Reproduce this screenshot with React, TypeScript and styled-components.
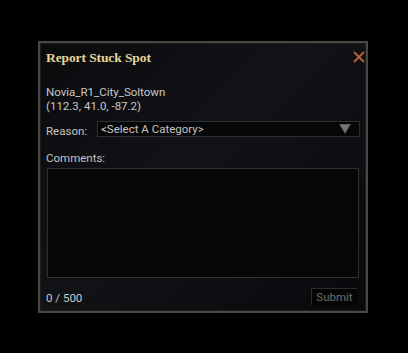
import styled, { createGlobalStyle } from "styled-components";

const GlobalStyle = createGlobalStyle`
  html, body {
    margin: 0;
    padding: 0;
    background: #000;
  }
  body {
    font-family: "Roboto", "Liberation Sans", sans-serif;
  }
`;

const Page = styled.div`
  width: 408px;
  height: 353px;
  background: #010101;
  padding: 41px 0 0 38px;
  box-sizing: border-box;
`;

const Dialog = styled.div`
  width: 330px;
  height: 272px;
  box-sizing: border-box;
  border: 2px solid #4a4845;
  box-shadow: inset 0 0 0 1px #1c1c1c;
  background: linear-gradient(135deg, #0a0b0d 0%, #111317 45%, #08090b 100%);
  padding: 6px 4px 6px 6px;
  display: flex;
  flex-direction: column;
  color: #c4c4c4;
  font-size: 11.5px;
`;

const TitleBar = styled.div`
  display: flex;
  justify-content: space-between;
  align-items: center;
  height: 19px;
`;

const Title = styled.h1`
  margin: 0;
  font-family: "Liberation Serif", "DejaVu Serif", serif;
  font-weight: 700;
  font-size: 13.5px;
  color: #e9d597;
  letter-spacing: -0.1px;
`;

const Close = styled.button`
  background: none;
  border: none;
  padding: 0;
  width: 12px;
  height: 12px;
  cursor: pointer;
  margin: -3px -3px 0 0;
`;

const Location = styled.div`
  margin-top: 17px;
  line-height: 14px;
  color: #c8c8c8;
`;

const Row = styled.div`
  display: flex;
  align-items: center;
  margin-top: 7px;
`;

const Label = styled.label`
  width: 51px;
  color: #c4c4c4;
  padding-top: 4px;
`;

const Select = styled.div`
  flex: 1;
  margin-right: 2px;
  height: 14px;
  border: 1px solid #2e2f31;
  background: #060708;
  display: flex;
  align-items: center;
  justify-content: space-between;
  padding: 0 8px 0 3px;
  color: #c4c4c4;
  line-height: 14px;
`;

const CommentsLabel = styled.div`
  margin-top: 13px;
`;

const TextArea = styled.div`
  margin: 3px 3px 0 1px;
  height: 111px;
  border: 1px solid #303133;
  background: #050607;
`;

const Footer = styled.div`
  margin-top: 10px;
  display: flex;
  justify-content: space-between;
  align-items: center;
`;

const Counter = styled.span`
  color: #c8c8c8;
  padding-top: 2px;
`;

const Submit = styled.button`
  width: 46px;
  height: 17px;
  margin-right: 5px;
  border: none;
  border-left: 1px solid #2c2c2c;
  border-top: 1px solid #2c2c2c;
  background: #050505;
  color: #6f6f6f;
  font-family: "Roboto", "Liberation Sans", sans-serif;
  font-size: 11.5px;
  padding: 0;
`;

export default function App() {
  return (
    <>
      <GlobalStyle />
      <Page>
        <Dialog>
          <TitleBar>
            <Title>Report Stuck Spot</Title>
            <Close aria-label="Close">
              <svg width="12" height="12" viewBox="0 0 12 12">
                <path d="M1 1L11 11M11 1L1 11" stroke="#c0603a" strokeWidth="1.8" />
              </svg>
            </Close>
          </TitleBar>
          <Location>
            Novia_R1_City_Soltown
            <br />
            (112.3, 41.0, -87.2)
          </Location>
          <Row>
            <Label>Reason:</Label>
            <Select>
              <span>&lt;Select A Category&gt;</span>
              <svg width="12" height="10" viewBox="0 0 12 10">
                <path d="M0 0H12L6 10Z" fill="#5f5f5c" />
                <path d="M2 1H10L6 8Z" fill="#787874" />
              </svg>
            </Select>
          </Row>
          <CommentsLabel>Comments:</CommentsLabel>
          <TextArea />
          <Footer>
            <Counter>0 / 500</Counter>
            <Submit>Submit</Submit>
          </Footer>
        </Dialog>
      </Page>
    </>
  );
}
